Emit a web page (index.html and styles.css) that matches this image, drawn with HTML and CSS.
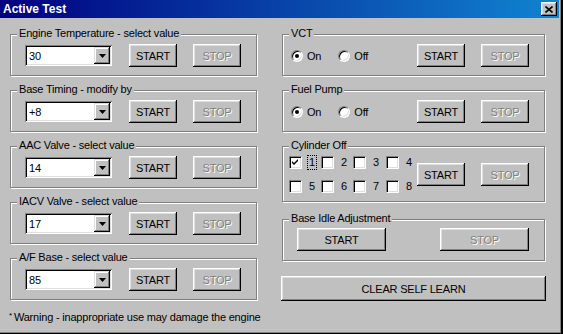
FILE: index.html
```html
<!DOCTYPE html>
<html lang="en">
<head>
    <meta charset="UTF-8">
    <title>Active Test</title>
    <link rel="stylesheet" href="styles.css">
</head>
<body>
<div class="window">
    <div class="titlebar">
        <span class="title">Active Test</span>
        <span class="close">
            <svg width="8" height="7" viewBox="0 0 8 7"><path d="M0.5 0.5 L7.5 6.5 M7.5 0.5 L0.5 6.5" stroke="#000" stroke-width="1.6" fill="none"/></svg>
        </span>
    </div>

    <div class="content">
        <div class="col col-left">
            <div class="group">
                <div class="legend">Engine Temperature - select value</div>
                <div class="row">
                    <div class="combo"><span class="combo-value">30</span><span class="combo-btn"><svg width="7" height="4" viewBox="0 0 7 4"><path d="M0 0H7L3.5 4Z" fill="#000"/></svg></span></div>
                    <button class="btn push">START</button>
                    <button class="btn" disabled>STOP</button>
                </div>
            </div>
            <div class="group">
                <div class="legend">Base Timing - modify by</div>
                <div class="row">
                    <div class="combo"><span class="combo-value">+8</span><span class="combo-btn"><svg width="7" height="4" viewBox="0 0 7 4"><path d="M0 0H7L3.5 4Z" fill="#000"/></svg></span></div>
                    <button class="btn push">START</button>
                    <button class="btn" disabled>STOP</button>
                </div>
            </div>
            <div class="group">
                <div class="legend">AAC Valve - select value</div>
                <div class="row">
                    <div class="combo"><span class="combo-value">14</span><span class="combo-btn"><svg width="7" height="4" viewBox="0 0 7 4"><path d="M0 0H7L3.5 4Z" fill="#000"/></svg></span></div>
                    <button class="btn push">START</button>
                    <button class="btn" disabled>STOP</button>
                </div>
            </div>
            <div class="group">
                <div class="legend">IACV Valve - select value</div>
                <div class="row">
                    <div class="combo"><span class="combo-value">17</span><span class="combo-btn"><svg width="7" height="4" viewBox="0 0 7 4"><path d="M0 0H7L3.5 4Z" fill="#000"/></svg></span></div>
                    <button class="btn push">START</button>
                    <button class="btn" disabled>STOP</button>
                </div>
            </div>
            <div class="group last">
                <div class="legend">A/F Base - select value</div>
                <div class="row">
                    <div class="combo"><span class="combo-value">85</span><span class="combo-btn"><svg width="7" height="4" viewBox="0 0 7 4"><path d="M0 0H7L3.5 4Z" fill="#000"/></svg></span></div>
                    <button class="btn push">START</button>
                    <button class="btn" disabled>STOP</button>
                </div>
            </div>
            <p class="warning"><span class="mark">*</span>Warning - inappropriate use may damage the engine</p>
        </div>

        <div class="col col-right">
            <div class="group">
                <div class="legend">VCT</div>
                <div class="row row-radio">
                    <span class="radio checked"></span><span class="opt">On</span>
                    <span class="radio"></span><span class="opt">Off</span>
                    <button class="btn push">START</button>
                    <button class="btn" disabled>STOP</button>
                </div>
            </div>
            <div class="group">
                <div class="legend">Fuel Pump</div>
                <div class="row row-radio">
                    <span class="radio checked"></span><span class="opt">On</span>
                    <span class="radio"></span><span class="opt">Off</span>
                    <button class="btn push">START</button>
                    <button class="btn" disabled>STOP</button>
                </div>
            </div>
            <div class="group group-tall">
                <div class="legend">Cylinder Off</div>
                <div class="row row-cyl">
                    <div class="cyl-grid">
                        <label class="cyl"><span class="check"><svg width="7" height="7" viewBox="0 0 7 7"><path d="M0 2L2 4L6 0V2L2 6L0 4Z" fill="#000"/></svg></span><span class="num focus">1</span></label>
                        <label class="cyl"><span class="check"></span><span class="num">2</span></label>
                        <label class="cyl"><span class="check"></span><span class="num">3</span></label>
                        <label class="cyl"><span class="check"></span><span class="num">4</span></label>
                        <label class="cyl"><span class="check"></span><span class="num">5</span></label>
                        <label class="cyl"><span class="check"></span><span class="num">6</span></label>
                        <label class="cyl"><span class="check"></span><span class="num">7</span></label>
                        <label class="cyl"><span class="check"></span><span class="num">8</span></label>
                    </div>
                    <button class="btn push">START</button>
                    <button class="btn" disabled>STOP</button>
                </div>
            </div>
            <div class="group group-idle">
                <div class="legend">Base Idle Adjustment</div>
                <div class="row row-idle">
                    <button class="btn wide">START</button>
                    <button class="btn wide" disabled>STOP</button>
                </div>
            </div>
            <button class="btn clear">CLEAR SELF LEARN</button>
        </div>
    </div>
</div>
</body>
</html>
```

FILE: styles.css
```css
body {
    margin: 0;
    font-family: "Liberation Sans", Arial, sans-serif;
    font-size: 11px;
    letter-spacing: -0.2px;
    color: #000;
}
.window {
    width: 563px;
    height: 334px;
    box-sizing: border-box;
    background-color: #c0c0c0;
    border-right: 2px solid #000;
    border-bottom: 1px solid #000;
    box-shadow: inset -1px -1px 0 #808080;
    padding-right: 2px;
}
.titlebar {
    height: 18px;
    display: flex;
    align-items: center;
    justify-content: space-between;
    padding: 0 2px 0 3px;
    background: linear-gradient(to right, #000080, #1084d0);
}
.title {
    color: #fff;
    font-weight: bold;
    font-size: 12px;
    letter-spacing: 0;
}
.close {
    width: 16px;
    height: 14px;
    box-sizing: border-box;
    display: flex;
    align-items: center;
    justify-content: center;
    background-color: #c0c0c0;
    box-shadow: inset -1px -1px #000, inset 1px 1px #fff, inset -2px -2px #808080, inset 2px 2px #dfdfdf;
}
.content {
    display: flex;
    gap: 25px;
    padding: 16px 0 0 10px;
}
.col-left {
    width: 247px;
}
.col-right {
    width: 263px;
}
.group {
    height: 42px;
    box-sizing: border-box;
    border: 1px solid #808080;
    box-shadow: inset 1px 1px 0 #fff, 1px 1px 0 #fff;
    margin-bottom: 14px;
}
.group.last {
    margin-bottom: 0;
}
.group-tall {
    height: 56px;
    margin-bottom: 17px;
}
.legend {
    display: table;
    margin: -8px 0 0 6px;
    padding: 0 2px;
    line-height: 13px;
    background-color: #c0c0c0;
}
.row {
    display: flex;
    align-items: center;
    gap: 16px;
    margin-top: 4px;
    padding: 0 15px 0 14px;
}
.push {
    margin-left: auto;
}
.btn {
    flex-shrink: 0;
    width: 48px;
    height: 23px;
    padding: 0;
    border: none;
    background-color: #c0c0c0;
    font-family: inherit;
    font-size: 11px;
    letter-spacing: -0.2px;
    color: #000;
    box-shadow: inset -1px -1px #000, inset 1px 1px #fff, inset -2px -2px #808080, inset 2px 2px #dfdfdf;
}
.btn:disabled {
    color: #808080;
    text-shadow: 1px 1px 0 #fff;
}
.combo {
    width: 87px;
    height: 21px;
    box-sizing: border-box;
    display: flex;
    align-items: center;
    justify-content: space-between;
    padding: 2px;
    background-color: #fff;
    box-shadow: inset 1px 1px #808080, inset -1px -1px #fff, inset 2px 2px #000, inset -2px -2px #dfdfdf;
}
.combo-value {
    padding-left: 2px;
}
.combo-btn {
    width: 16px;
    height: 17px;
    box-sizing: border-box;
    display: flex;
    align-items: center;
    justify-content: center;
    background-color: #c0c0c0;
    box-shadow: inset -1px -1px #000, inset 1px 1px #dfdfdf, inset -2px -2px #808080, inset 2px 2px #fff;
}
.row-radio {
    gap: 0;
    padding-left: 8px;
}
.radio {
    flex-shrink: 0;
    width: 12px;
    height: 12px;
    box-sizing: border-box;
    border-radius: 50%;
    border: 1px solid;
    border-color: #808080 #fff #fff #808080;
    box-shadow: inset 1px 1px #000, inset -1px -1px #dfdfdf;
    background-color: #fff;
    display: flex;
    align-items: center;
    justify-content: center;
}
.radio.checked::after {
    content: "";
    width: 4px;
    height: 4px;
    border-radius: 50%;
    background-color: #000;
}
.opt {
    margin: 0 17px 0 4px;
}
.row-radio .btn + .btn,
.row-cyl .btn + .btn {
    margin-left: 16px;
}
.row-cyl {
    gap: 0;
    margin-top: 4px;
    padding-left: 6px;
}
.cyl-grid {
    display: grid;
    grid-template-columns: 32px 32px 33px auto;
    row-gap: 11px;
}
.cyl {
    display: flex;
    align-items: center;
    height: 13px;
}
.check {
    flex-shrink: 0;
    width: 13px;
    height: 13px;
    box-sizing: border-box;
    border: 1px solid;
    border-color: #808080 #fff #fff #808080;
    box-shadow: inset 1px 1px #000, inset -1px -1px #dfdfdf;
    background-color: #fff;
    display: flex;
    align-items: center;
    justify-content: center;
}
.num {
    margin-left: 5px;
    padding: 0 1px;
    line-height: 13px;
    border: 1px solid transparent;
}
.num.focus {
    border: 1px dotted #000;
}
.row-idle {
    margin-top: 3px;
    justify-content: space-between;
}
.btn.wide {
    width: 89px;
}
.btn.clear {
    display: block;
    width: 265px;
    height: 25px;
    margin: 15px 0 0 -1px;
}
.warning {
    margin: 9px 0 0 -1px;
    line-height: 13px;
    white-space: nowrap;
}
.mark {
    font-size: 8px;
    vertical-align: 3px;
    margin-right: 2px;
}
```
